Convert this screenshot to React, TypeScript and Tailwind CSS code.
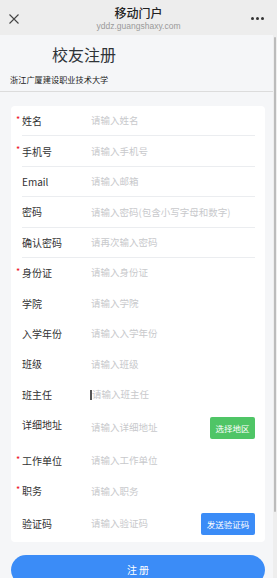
import React from "react";

const font = { fontFamily: '"Noto Sans CJK SC", "Noto Sans", sans-serif' };

type RowProps = {
  label: string;
  ph: string;
  req?: boolean;
  divider?: boolean;
  cursor?: boolean;
};

function Row({ label, ph, req, divider, cursor }: RowProps) {
  return (
    <div className="relative flex items-center h-[30.4px] pl-[11px] pr-[10px]">
      {req && (
        <span className="absolute left-[5px] top-[9px] text-[9px] leading-none text-[#ee0a24]">*</span>
      )}
      <span className="w-[69px] text-[10px] leading-none text-[#323233]">{label}</span>
      {cursor && <span className="inline-block w-[1.5px] h-[10px] bg-[#555] -ml-[1px] mr-[0.5px]" />}
      <span className="text-[9.5px] leading-none text-[#c8c9cc]">{ph}</span>
      {divider && <div className="absolute bottom-0 left-[11px] right-[10px] h-px bg-[#ebedf0]" />}
    </div>
  );
}

export default function App() {
  return (
    <div className="relative w-[277px] h-[578px] overflow-hidden bg-[#f5f6f8]" style={font}>
      {/* header */}
      <div className="relative h-[35px] bg-[#ededed] flex flex-col items-center">
        <div className="mt-[5px] text-[12px] leading-[16px] font-medium text-[#222]">移动门户</div>
        <div className="text-[8.5px] leading-[10px] text-[#9a9a9a]" style={{ fontFamily: '"Liberation Sans", sans-serif' }}>
          yddz.guangshaxy.com
        </div>
        <svg className="absolute left-[9px] top-[14px]" width="10" height="10" viewBox="0 0 10 10">
          <path d="M0.5 0.5 L9.5 9.5 M9.5 0.5 L0.5 9.5" stroke="#444" strokeWidth="1.1" />
        </svg>
        <div className="absolute left-[251px] top-[17px] flex gap-[2px]">
          <span className="w-[3px] h-[3px] rounded-full bg-[#333]" />
          <span className="w-[3px] h-[3px] rounded-full bg-[#333]" />
          <span className="w-[3px] h-[3px] rounded-full bg-[#333]" />
        </div>
      </div>

      {/* scrollbar */}
      <div className="absolute left-[273px] top-[35px] w-[4px] bottom-0 bg-[#eeeeee]" />
      <div className="absolute left-[274px] top-[37px] w-[2px] h-[475px] bg-[#bcbcbc] rounded-full" />

      <div className="w-[273px]">
        <div className="pl-[52px] pt-[10px] h-[39px] text-[16px] leading-[18px] text-[#2f3337]">校友注册</div>
        <div className="h-[18px] pl-[10px] border-b border-[#dcdcdc] text-[8.2px] leading-[10px] text-[#222]">
          浙江广厦建设职业技术大学
        </div>

        <div className="ml-[11px] mt-[14px] w-[254px] bg-white rounded-[4px]">
          <Row label="姓名" ph="请输入姓名" req divider />
          <Row label="手机号" ph="请输入手机号" req divider />
          <Row label="Email" ph="请输入邮箱" divider />
          <Row label="密码" ph="请输入密码(包含小写字母和数字)" divider />
          <Row label="确认密码" ph="请再次输入密码" divider />
          <Row label="身份证" ph="请输入身份证" req />
          <Row label="学院" ph="请输入学院" />
          <Row label="入学年份" ph="请输入入学年份" />
          <Row label="班级" ph="请输入班级" />
          <Row label="班主任" ph="请输入班主任" cursor />
          <div className="relative flex items-center h-[36px] pl-[11px] pr-[10px]">
            <span className="w-[69px] text-[10px] leading-none text-[#323233] -mt-[5px]">详细地址</span>
            <span className="flex-1 text-[9.5px] leading-none text-[#c8c9cc]">请输入详细地址</span>
            <button className="w-[45px] h-[22px] rounded-[2px] bg-[#4fc566] text-white text-[8.5px] leading-none">
              选择地区
            </button>
          </div>
          <Row label="工作单位" ph="请输入工作单位" req />
          <Row label="职务" ph="请输入职务" req />
          <div className="relative flex items-center h-[35px] pl-[11px] pr-[10px]">
            <span className="w-[69px] text-[10px] leading-none text-[#323233]">验证码</span>
            <span className="flex-1 text-[9.5px] leading-none text-[#c8c9cc]">请输入验证码</span>
            <button className="w-[54px] h-[22px] rounded-[2px] bg-[#3b8cf7] text-white text-[8.5px] leading-none">
              发送验证码
            </button>
          </div>
        </div>

        <button className="ml-[11px] mt-[13px] w-[254px] h-[30px] rounded-full bg-[#3b8cf7] text-white text-[10px] leading-none">
          注 册
        </button>
      </div>
    </div>
  );
}
